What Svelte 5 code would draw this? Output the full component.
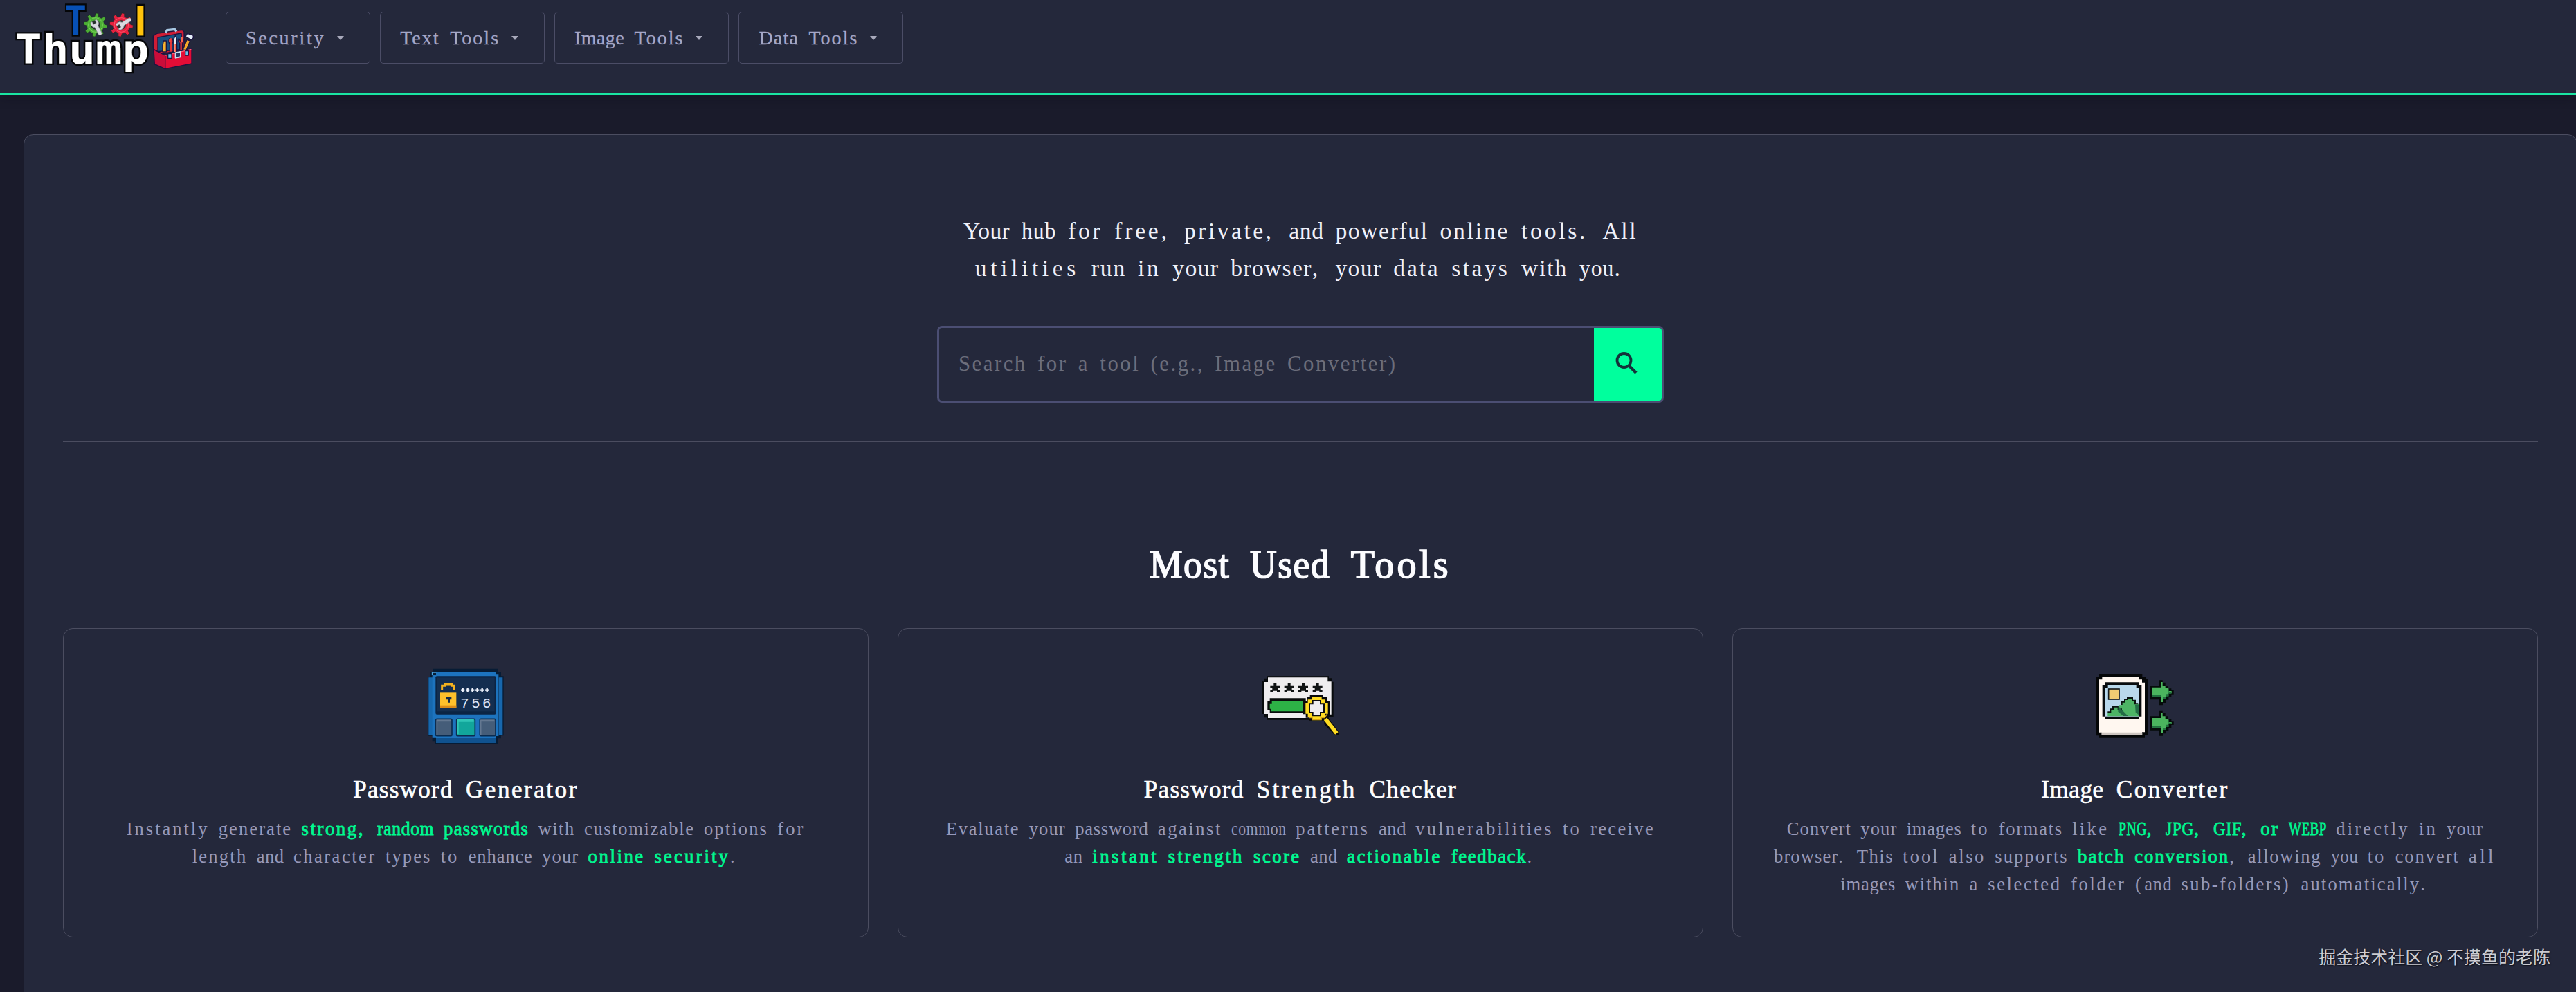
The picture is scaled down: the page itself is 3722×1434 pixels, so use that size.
<script>
  const menus = ["Security", "Text Tools", "Image Tools", "Data Tools"];

  const intro = [
    "Your hub for free, private, and powerful online tools. All",
    "utilities run in your browser, your data stays with you.",
  ];

  const tools = [
    {
      icon: "password",
      title: "Password Generator",
      text: [
        { t: "Instantly generate " },
        { t: "strong, random passwords", strong: true },
        { t: " with customizable options for length and character types to enhance your " },
        { t: "online security", strong: true },
        { t: "." },
      ],
    },
    {
      icon: "strength",
      title: "Password Strength Checker",
      text: [
        { t: "Evaluate your password against common patterns and vulnerabilities to receive an " },
        { t: "instant strength score", strong: true },
        { t: " and " },
        { t: "actionable feedback", strong: true },
        { t: "." },
      ],
    },
    {
      icon: "converter",
      title: "Image Converter",
      text: [
        { t: "Convert your images to formats like " },
        { t: "PNG, JPG, GIF, or WEBP", strong: true },
        { t: " directly in your browser. This tool also supports " },
        { t: "batch conversion", strong: true },
        { t: ", allowing you to convert all images within a selected folder (and sub-folders) automatically." },
      ],
    },
  ];

  let search = "";
  const teeth = [0, 45, 90, 135, 180, 225, 270, 315];

  // every word takes one cell per letter: narrow words are spaced out,
  // wide ones are condensed
  const ctx = document.createElement("canvas").getContext("2d");
  ctx.font = '100px "Liberation Serif"';
  function fit(word, cell) {
    const width = ctx.measureText(word).width / 100;
    const target = cell * word.length;
    if (width > target * 0.98) {
      const inner = width + 0.03 * word.length;
      return `display: inline-block; width: ${target.toFixed(3)}em; letter-spacing: 0.03em; transform: scaleX(${(target / inner).toFixed(4)})`;
    }
    return `letter-spacing: ${((target - width) / word.length).toFixed(4)}em`;
  }
  function tokens(text) {
    return text.split(/([ .,()])/).filter((t) => t !== "");
  }
</script>

{#snippet mono(text, cell = 0.5)}
  {#each tokens(text) as token}{#if token === " "}{token}{:else}<span class="word" style={fit(token, cell)}>{token}</span>{/if}{/each}
{/snippet}

{#snippet gear(x, y, color, light, turn)}
  <g transform="translate({x} {y})">
    {#each teeth as angle}
      <path d="M-9 -34 L-6 -51 H6 L9 -34 Z" transform="rotate({angle + 8})" fill={color} stroke="#1b2a22" stroke-width="2" />
    {/each}
    <circle r="37" fill={color} />
    <circle r="31" fill="none" stroke={light} stroke-width="3" />
    <circle r="20" fill="#26302b" />
    <g transform="rotate({turn})">
      <path d="M-8 45 V8 Q-19 2 -17 -12 L-13 -20 L-7 -18 V-6 H7 V-18 L13 -20 L17 -12 Q19 2 8 8 V45 Q0 53 -8 45 Z" fill="#d9d9df" stroke="#8d8f98" stroke-width="2" />
    </g>
  </g>
{/snippet}

<div class="page">
  <nav>
    <svg class="logo" viewBox="0 0 870 333" aria-label="Tool Thump">
      <g class="wordmark" stroke="#050608" stroke-width="14" stroke-linejoin="miter" paint-order="stroke">
        <text x="281" y="152" font-size="176" textLength="94" lengthAdjust="spacingAndGlyphs" fill="#0750b5">T</text>
        <text class="plain" x="583" y="152" font-size="171" textLength="52" lengthAdjust="spacingAndGlyphs" fill="#ffc20c">l</text>
        <text x="66" y="277" font-size="176" textLength="580" lengthAdjust="spacingAndGlyphs" fill="#fff">Thump</text>
      </g>
      {@render gear(414, 108, "#4cae35", "#79d25a", -28)}
      {@render gear(526, 108, "#e5213f", "#ff5268", -122)}
      <g stroke="#1d1440" stroke-width="4" stroke-linejoin="round">
        <path d="M664 156 L680 145 L790 130 L798 138 V214 L680 238 L664 210 Z" fill="#cf1d35" />
        <path d="M684 162 L786 144 L790 214 L684 224 Z" fill="#174f80" />
        <path d="M718 143 L724 131 L758 127 L765 137" fill="none" stroke="#a8c8e4" stroke-width="10" />
        <path d="M709 177 h12 v48 h-16 v-28 z" fill="#f7b32e" />
        <path d="M735 166 q-7 16 1 25 v35 h10 v-36 q8 -13 0 -24" fill="#e4373a" />
        <path d="M753 169 l7 -14 l7 14 v58 h-14 z" fill="#e9edf5" />
        <path d="M775 166 q-5 13 4 22 v34 h12 v-34 q8 -12 1 -22 l-8 15 z" fill="#bd303c" />
        <path d="M810 172 L824 177 L807 218 L793 216 Z" fill="#f6a927" />
        <path d="M804 158 L812 145 L837 153 L839 163 L828 173 Z" fill="#e6f0fa" />
        <path d="M666 215 L716 240 L831 211 V276 L715 299 L670 278 Z" fill="#e30d36" />
        <path d="M666 215 L716 240 V299 L670 278 Z" fill="#c90d3a" />
        <path d="M714 241 L829 214" fill="none" stroke="#ff6276" />
        <path d="M728 233 h16 v20 h-16 z M803 221 h14 v19 h-14 z" fill="#6bc1e7" />
        <path d="M761 229 l22 -4 v22 l-22 4 z" fill="#29345f" stroke="#c4dff0" stroke-width="6" />
      </g>
      <path d="M760 190 v35 M789 160 v23 M736 169 v14" stroke="#ff6648" stroke-width="6" />
    </svg>
    <div class="menus">
      {#each menus as menu}
        <button class="menu" type="button">
          <span>{@render mono(menu, 0.514)}</span>
          <i class="caret"></i>
        </button>
      {/each}
    </div>
  </nav>

  <main>
    <header>
      {#each intro as line}
        <p>{@render mono(line)}</p>
      {/each}
      <form class="search" on:submit|preventDefault>
        <input type="text" bind:value={search} placeholder="Search for a tool (e.g., Image Converter)" />
        <button type="submit" aria-label="Search">
          <svg viewBox="0 0 32 34">
            <circle cx="12.5" cy="13" r="10" fill="none" stroke="#14313a" stroke-width="3.8" />
            <path d="M19.5 20.5 L30 31" stroke="#14313a" stroke-width="4.4" />
          </svg>
        </button>
      </form>
    </header>

    <section>
      <h2>{@render mono("Most Used Tools", 0.519)}</h2>
      <div class="cards">
        {#each tools as tool}
          <article>
            {#if tool.icon === "password"}
              <svg class="icon" viewBox="81 75 336 336">
                <path d="M108 80 H390 V95 H402 V112 H413 V370 H402 V382 H390 V406 H116 V394 H104 V371 H84 V115 H96 V96 H108 Z" fill="#071c35" />
                <path d="M88 118 H106 V368 H88 Z M392 118 H409 V368 H392 Z" fill="#1767ad" />
                <path d="M120 94 H378 V106 H391 V372 H380 V394 H120 V380 H104 V108 H120 Z" fill="#1d73be" />
                <path d="M120 381 H380 V402 H120 Z" fill="#10528f" />
                <path d="M104 108 V96 H121" fill="none" stroke="#4aa2df" stroke-width="5" />
                <rect x="118" y="112" width="262" height="166" rx="6" fill="#0b2444" />
                <rect x="124" y="118" width="250" height="147" fill="#142e50" />
                <path d="M146 174 V154 H158 V147 H189 V154 H199 V174" fill="none" stroke="#f3b21e" stroke-width="9" />
                <path d="M138 184 H208 V249 H138 Z" fill="#ffc02b" />
                <path d="M138 239 H208 V249 H138 Z" fill="#dc8b18" />
                <path d="M165 201 H187 V214 H180 V227 H171 V214 H165 Z" fill="#172b47" />
                {#each [236, 257, 278, 299, 320, 341] as x}
                  <path d="M{x - 8} 173 H{x + 8} M{x} 165 V181" stroke="#f1f6ff" stroke-width="7" />
                {/each}
                <text class="digits" x="226" y="248" font-size="62" textLength="132">756</text>
                <g stroke="#0b2c50" stroke-width="5">
                  <rect x="119" y="298" width="70" height="73" rx="5" fill="#455d79" />
                  <rect x="209" y="298" width="80" height="73" rx="5" fill="#12a69b" />
                  <rect x="310" y="298" width="68" height="73" rx="5" fill="#455d79" />
                </g>
                <path d="M124 366 V304 H184 M314 366 V304 H373" fill="none" stroke="#647891" stroke-width="5" />
                <path d="M214 363 V304 H284" fill="none" stroke="#30c5b6" stroke-width="8" />
              </svg>
            {:else if tool.icon === "strength"}
              <svg class="icon" viewBox="69 45 336 336">
                <path d="M92 82 H360 V91 H374 V107 H380 V258 H360 V272 H92 V262 H78 V246 H70 V104 H80 V92 H92 Z" fill="#080b0d" />
                <path d="M96 88 H355 V106 H371 V248 H355 V264 H96 V246 H78 V108 H96 Z" fill="#efedef" />
                {#each [127, 188, 249, 311] as x}
                  <path transform="translate({x} 133)" d="M-6 -22 H6 V-11 H21 V1 H12 V10 H21 V20 H8 V13 H-8 V20 H-21 V10 H-12 V1 H-21 V-11 H-6 Z" fill="#101314" />
                {/each}
                <path d="M104 178 H260 V240 H104 V229 H94 V190 H104 Z" fill="#090c0c" />
                <path d="M113 191 H247 V235 H110 V224 H104 V200 H113 Z" fill="#2db246" />
                <path d="M278 162 H334 V172 H351 V190 H366 V258 H354 L404 325 V338 H386 L340 291 V275 H276 V263 H260 V247 H249 V190 H264 V174 H278 Z" fill="#090a0b" />
                <path d="M285 172 H329 V184 H344 V198 H356 V245 H344 V260 H329 V274 H285 V260 H269 V245 H259 V198 H269 V184 H285 Z" fill="#ffdc21" />
                <path d="M290 189 H324 V202 H339 V240 H324 V253 H290 V240 H276 V202 H290 Z" fill="#efedef" stroke="#0d0e10" stroke-width="6" />
                <path d="M345 268 L394 330" stroke="#ffdc21" stroke-width="17" />
                <path d="M273 263 H288 V271 H325 V263 H342 L354 244" fill="none" stroke="#d7a313" stroke-width="4" />
              </svg>
            {:else}
              <svg class="icon" viewBox="57 45 336 336">
                <path d="M69 72 H256 V84 H270 V95 H279 V336 H267 V350 H69 V340 H57 V85 H69 Z" fill="#050708" />
                <path d="M82 85 H241 V97 H255 V110 H267 V325 H255 V338 H80 V326 H69 V97 H82 Z" fill="#fff7f0" />
                <path d="M80 326 H256 V338 H80 Z" fill="#cdc5c0" />
                <path d="M94 109 H241 V120 H253 V257 H241 V268 H94 V257 H83 V120 H94 Z" fill="#080b0d" />
                <path d="M107 120 H230 V132 H242 V257 H95 V132 H107 Z" fill="#b9d8eb" />
                <rect x="110" y="138" width="46" height="45" fill="#f0cc73" stroke="#161a1d" stroke-width="5" />
                <path d="M106 256 V239 H118 V227 H129 V217 H155 V208 H167 V195 H180 V184 H192 V177 H213 V188 H225 V202 H242 V256 Z" fill="#4db465" />
                <path d="M106 238 H118 V226 H129 V215 H152 V226 H165 V238 M167 207 V194 H180 V183 H192 V177 H213 V188 H225 V202 H238" fill="none" stroke="#0b1510" stroke-width="6" />
                <path d="M152 212 L194 255 H174 L151 236 Z M225 206 H240 V250 L227 239 Z" fill="#236c46" />
                {#each [0, 133] as dy}
                  <g transform="translate(0 {dy})">
                    <path d="M290 123 H327 V100 H344 V110 H356 V123 H369 V136 H382 V144 H392 V161 H382 V173 H370 V185 H357 V198 H345 V208 H327 V184 H290 Z" fill="#050b0a" />
                    <path d="M300 131 H337 V108 H344 V123 H356 V135 H370 V147 H383 V157 H370 V169 H357 V182 H345 V195 H337 V172 H300 Z" fill="#4bb45e" />
                    <path d="M300 165 H337 V172 H300 Z M345 182 H357 V170 H370 V158 H382 V151 H372 V139 H370 V160 H357 V173 H345 Z" fill="#20713f" />
                  </g>
                {/each}
              </svg>
            {/if}
            <h3>{@render mono(tool.title, 0.517)}</h3>
            <p>
              {#each tool.text as part}{#if part.strong}<strong>{@render mono(part.t, 0.515)}</strong>{:else}{@render mono(part.t)}{/if}{/each}
            </p>
          </article>
        {/each}
      </div>
    </section>
  </main>

  <div class="watermark">掘金技术社区 @ 不摸鱼的老陈</div>
</div>

<style>
  :global(body) {
    margin: 0;
    background: #1a1b2b;
  }

  .page {
    position: relative;
    height: 1434px;
    overflow: hidden;
    font-family: "Liberation Serif", serif;
    color: #f0f1fa;
  }

  .word {
    transform-origin: left;
    white-space: nowrap;
  }

  nav {
    box-sizing: border-box;
    height: 138px;
    display: flex;
    gap: 36px;
    background: #24283b;
    border-bottom: 3px solid #1ae5a2;
    box-shadow: 0 4px 14px rgba(10, 10, 25, 0.25);
  }

  .logo {
    width: 290px;
    height: 111px;
  }

  .wordmark {
    font-family: "DejaVu Sans Mono", monospace;
    font-weight: bold;
  }

  .plain {
    font-family: "DejaVu Sans", sans-serif;
  }

  .menus {
    display: flex;
    align-items: flex-start;
    gap: 14px;
    padding-top: 17px;
  }

  .menu {
    box-sizing: border-box;
    height: 75px;
    display: flex;
    align-items: center;
    padding: 0 36px 0 28px;
    background: none;
    border: 1px solid #4b4d66;
    border-radius: 5px;
    color: #a5a7c8;
    font: 28px "Liberation Serif", serif;
    word-spacing: 0.264em;
    -webkit-text-stroke: 0.3px #a5a7c8;
  }

  .caret {
    margin: 0 1px 0 17px;
    border: 5.5px solid transparent;
    border-top: 6px solid #a8a9bb;
    border-bottom: 0;
  }

  main {
    box-sizing: border-box;
    height: 1300px;
    margin: 56px -2px 0 34px;
    padding: 112px 56px 0;
    background: #24283b;
    border: 1px solid #4b4d60;
    border-radius: 14px;
  }

  header {
    display: flex;
    flex-direction: column;
    align-items: center;
    padding-bottom: 56px;
    border-bottom: 1px solid #4b4d60;
  }

  header p {
    margin: 0;
    font-size: 33.6px;
    line-height: 54px;
    word-spacing: 0.25em;
    white-space: nowrap;
  }

  .search {
    box-sizing: border-box;
    width: 1050px;
    height: 111px;
    display: flex;
    margin-top: 56px;
    overflow: hidden;
    border: 3px solid #4b4e73;
    border-radius: 7px;
  }

  .search input {
    flex: 1;
    min-width: 0;
    padding: 0 28px;
    background: none;
    border: 0;
    outline: 0;
    color: #f0f1fa;
    font: 30.8px "Liberation Serif", serif;
    letter-spacing: 0.081em;
    word-spacing: 0.167em;
  }

  .search input::placeholder {
    color: #6c6e7b;
    opacity: 1;
  }

  .search button {
    width: 98px;
    display: flex;
    align-items: center;
    justify-content: center;
    padding: 0 5px 4px 0;
    background: #00ff9d;
    border: 0;
  }

  .search button svg {
    width: 32px;
    height: 34px;
  }

  h2 {
    margin: 144px 0 58px;
    font-size: 56px;
    font-weight: normal;
    line-height: 67px;
    text-align: center;
    word-spacing: 0.269em;
    color: #fcfcff;
    -webkit-text-stroke: 1.7px #fcfcff;
  }

  .cards {
    display: grid;
    grid-template-columns: repeat(3, 1fr);
    gap: 42px;
  }

  article {
    box-sizing: border-box;
    height: 447px;
    padding: 56px 55px 0;
    border: 1px solid #4b4d60;
    border-radius: 14px;
    text-align: center;
  }

  .icon {
    display: block;
    width: 112px;
    height: 112px;
    margin: 0 auto;
  }

  .digits {
    font-family: "Liberation Mono", monospace;
    fill: #dbe5fa;
  }

  h3 {
    margin: 44px 0 15px;
    font-size: 35px;
    font-weight: normal;
    line-height: 42px;
    word-spacing: 0.267em;
    color: #fff;
    -webkit-text-stroke: 0.7px #fff;
  }

  article p {
    margin: 0;
    font-size: 26.6px;
    line-height: 40px;
    word-spacing: 0.25em;
    color: #9799b9;
  }

  strong {
    font-weight: normal;
    word-spacing: 0.265em;
    color: #00f890;
    -webkit-text-stroke: 0.9px #00f890;
  }

  .watermark {
    position: absolute;
    right: 37px;
    bottom: 34px;
    font: 25px/36px "Noto Sans CJK SC", sans-serif;
    color: #ccccd2;
    text-shadow: 1px 1px 2px #0b0c14;
  }
</style>
